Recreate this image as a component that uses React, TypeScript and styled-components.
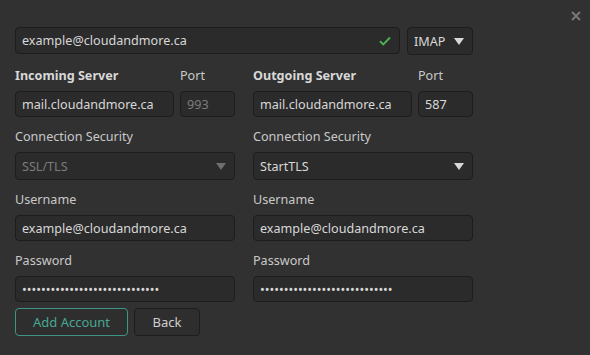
import React from "react";
import styled, { createGlobalStyle } from "styled-components";

const GlobalStyle = createGlobalStyle`
  html, body {
    margin: 0;
    padding: 0;
    background: #313131;
  }
  body {
    font-family: 'Noto Sans', 'Open Sans', sans-serif;
    font-size: 12.6px;
    color: #d6d6d6;
  }
`;

const Dialog = styled.div`
  position: relative;
  width: 590px;
  height: 355px;
  box-sizing: border-box;
  padding: 27px 0 0 15px;
  background: #313131;
`;

const CloseButton = styled.button`
  position: absolute;
  top: 9px;
  right: 7px;
  width: 14px;
  height: 14px;
  padding: 0;
  border: none;
  background: none;
  color: #7a7a7a;
  display: flex;
  align-items: center;
  justify-content: center;
`;

const Form = styled.div`
  width: 458px;
  display: flex;
  flex-direction: column;
`;

const TopRow = styled.div`
  display: flex;
  gap: 7px;
`;

const Pair = styled.div<{ $top?: number }>`
  display: flex;
  gap: 18px;
  margin-top: ${p => p.$top ?? 12}px;
`;

const Column = styled.div`
  width: 220px;
  display: flex;
  gap: 6px;
`;

const Field = styled.div<{ $w?: number }>`
  display: flex;
  flex-direction: column;
  gap: 7px;
  width: ${p => (p.$w ? `${p.$w}px` : '100%')};
  min-width: 0;
`;

const Label = styled.label<{ $bold?: boolean }>`
  height: 16px;
  line-height: 16px;
  font-weight: ${p => (p.$bold ? 700 : 400)};
  color: ${p => (p.$bold ? '#d8d8d8' : '#c9c9c9')};
  white-space: nowrap;
`;

const Box = styled.div<{ $h?: number; $disabled?: boolean; $grow?: boolean; $w?: number }>`
  height: ${p => p.$h ?? 26}px;
  width: ${p => (p.$w ? `${p.$w}px` : 'auto')};
  box-sizing: border-box;
  background: #2b2b2b;
  border: 1px solid #1d1d1d;
  border-radius: 4px;
  display: flex;
  align-items: center;
  padding: 0 8px 0 6px;
  gap: 6px;
  flex: ${p => (p.$grow ? 1 : 'none')};
  color: ${p => (p.$disabled ? '#7c7c7c' : '#d8d8d8')};
  min-width: 0;
  overflow: hidden;
`;

const Input = styled.input<{ $disabled?: boolean }>`
  flex: 1;
  min-width: 0;
  border: none;
  outline: none;
  background: transparent;
  padding: 0;
  font: inherit;
  color: ${p => (p.$disabled ? '#7c7c7c' : '#d8d8d8')};
`;

const SelectText = styled.span`
  flex: 1;
  white-space: nowrap;
`;

const ArrowWrap = styled.span<{ $disabled?: boolean }>`
  display: flex;
  color: ${p => (p.$disabled ? '#6e6e6e' : '#d8d8d8')};
`;

const Arrow = () => (
  <svg width="10" height="7" viewBox="0 0 10 7">
    <path d="M0 0 H10 L5 7 Z" fill="currentColor" />
  </svg>
);

const Check = () => (
  <svg width="12" height="10" viewBox="0 0 12 10">
    <path d="M1 5.2 L4.3 8.4 L11 1.5" stroke="#4caf50" strokeWidth="2" fill="none" />
  </svg>
);

const Select = ({ value, disabled, width }: { value: string; disabled?: boolean; width?: number }) => (
  <Box $h={28} $disabled={disabled} $w={width}>
    <SelectText>{value}</SelectText>
    <ArrowWrap $disabled={disabled}>
      <Arrow />
    </ArrowWrap>
  </Box>
);

const ButtonRow = styled.div`
  display: flex;
  gap: 6px;
  margin-top: 6px;
`;

const Button = styled.button<{ $primary?: boolean; $w: number }>`
  width: ${p => p.$w}px;
  height: 28px;
  border-radius: 4px;
  background: #2e2e2e;
  border: 1px solid ${p => (p.$primary ? '#3f9584' : '#1d1d1d')};
  color: ${p => (p.$primary ? '#48a893' : '#cfcfcf')};
  font: inherit;
  font-size: 13px;
  padding: 0;
`;

const PASS = '••••••••••••••••••••••••••••';

const ServerColumn = ({ title, host, port, portDisabled }: { title: string; host: string; port: string; portDisabled?: boolean }) => (
  <Column>
    <Field $w={159}>
      <Label $bold>{title}</Label>
      <Box>
        <Input defaultValue={host} />
      </Box>
    </Field>
    <Field $w={55}>
      <Label>Port</Label>
      <Box $disabled={portDisabled}>
        <Input $disabled={portDisabled} defaultValue={port} readOnly={portDisabled} />
      </Box>
    </Field>
  </Column>
);

export default function App() {
  return (
    <>
      <GlobalStyle />
      <Dialog>
        <CloseButton aria-label="Close">
          <svg width="10" height="10" viewBox="0 0 10 10">
            <path d="M1 1 L9 9 M9 1 L1 9" stroke="currentColor" strokeWidth="1.8" />
          </svg>
        </CloseButton>
        <Form>
          <TopRow>
            <Box $h={27} $grow>
              <Input defaultValue="example@cloudandmore.ca" />
              <Check />
            </Box>
            <Select value="IMAP" width={66} />
          </TopRow>

          <Pair $top={13}>
            <ServerColumn title="Incoming Server" host="mail.cloudandmore.ca" port="993" portDisabled />
            <ServerColumn title="Outgoing Server" host="mail.cloudandmore.ca" port="587" />
          </Pair>

          <Pair>
            <Column>
              <Field>
                <Label>Connection Security</Label>
                <Select value="SSL/TLS" disabled />
              </Field>
            </Column>
            <Column>
              <Field>
                <Label>Connection Security</Label>
                <Select value="StartTLS" />
              </Field>
            </Column>
          </Pair>

          <Pair>
            <Column>
              <Field>
                <Label>Username</Label>
                <Box>
                  <Input defaultValue="example@cloudandmore.ca" />
                </Box>
              </Field>
            </Column>
            <Column>
              <Field>
                <Label>Username</Label>
                <Box>
                  <Input defaultValue="example@cloudandmore.ca" />
                </Box>
              </Field>
            </Column>
          </Pair>

          <Pair>
            <Column>
              <Field>
                <Label>Password</Label>
                <Box>
                  <Input type="password" defaultValue={PASS + '•'} />
                </Box>
              </Field>
            </Column>
            <Column>
              <Field>
                <Label>Password</Label>
                <Box>
                  <Input type="password" defaultValue={PASS} />
                </Box>
              </Field>
            </Column>
          </Pair>

          <ButtonRow>
            <Button $primary $w={113}>Add Account</Button>
            <Button $w={66}>Back</Button>
          </ButtonRow>
        </Form>
      </Dialog>
    </>
  );
}
